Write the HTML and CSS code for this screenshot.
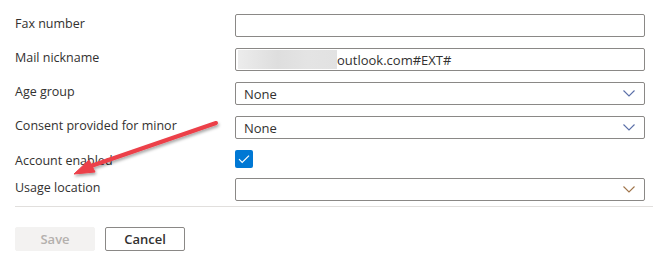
FILE: index.html
```html
<!DOCTYPE html>
<html lang="en">
<head>
  <meta charset="UTF-8">
  <title>User properties</title>
  <link rel="stylesheet" href="styles.css">
</head>
<body>

  <form class="props">
    <div class="row">
      <label>Fax number</label>
      <div class="field"></div>
    </div>
    <div class="row">
      <label>Mail nickname</label>
      <div class="field"><span class="blur"></span>outlook.com#EXT#</div>
    </div>
    <div class="row">
      <label>Age group</label>
      <div class="field select">None
        <svg class="chev" width="12" height="7" viewBox="0 0 12 7"><path d="M0.5 0.5 L6 6 L11.5 0.5" fill="none" stroke="#5b6fa8" stroke-width="1.1"/></svg>
      </div>
    </div>
    <div class="row">
      <label>Consent provided for minor</label>
      <div class="field select">None
        <svg class="chev" width="12" height="7" viewBox="0 0 12 7"><path d="M0.5 0.5 L6 6 L11.5 0.5" fill="none" stroke="#5b6fa8" stroke-width="1.1"/></svg>
      </div>
    </div>
    <div class="row check-row">
      <label>Account enabled</label>
      <span class="checkbox">
        <svg width="12" height="10" viewBox="0 0 12 10"><path d="M1 5.2 L4.2 8.4 L11 1.6" fill="none" stroke="#fff" stroke-width="1.2"/></svg>
      </span>
    </div>
    <div class="row">
      <label>Usage location</label>
      <div class="field select">
        <svg class="chev" width="12" height="7" viewBox="0 0 12 7"><path d="M0.5 0.5 L6 6 L11.5 0.5" fill="none" stroke="#a0744a" stroke-width="1.1"/></svg>
      </div>
    </div>
  </form>

  <hr class="divider">

  <div class="actions">
    <button type="button" class="btn" disabled>Save</button>
    <button type="button" class="btn">Cancel</button>
  </div>

  <!-- annotation arrow drawn over the form -->
  <svg class="arrow" width="653" height="256" viewBox="0 0 653 256">
    <defs>
      <filter id="sh" x="-20%" y="-20%" width="140%" height="140%">
        <feDropShadow dx="1" dy="2" stdDeviation="1.5" flood-color="#000" flood-opacity="0.35"/>
      </filter>
    </defs>
    <g filter="url(#sh)" fill="#ec3f48" stroke="#ec3f48">
      <line x1="216" y1="123" x2="88" y2="167" stroke-width="4" stroke-linecap="round"/>
      <polygon points="74,174 89,160 95,172" stroke-width="1" stroke-linejoin="round"/>
    </g>
  </svg>

</body>
</html>
```

FILE: styles.css
```css
body {
  margin: 0;
  padding: 14px 0 0 15px;
  font-family: 'Segoe UI', 'Open Sans', sans-serif;
  font-size: 12.5px;
  color: #323130;
  background-color: #fff;
  position: relative;
  height: 256px;
  box-sizing: border-box;
  overflow: hidden;
}

.props {
  display: flex;
  flex-direction: column;
  gap: 11px;
  width: 630px;
}

.row {
  display: grid;
  grid-template-columns: 220px 410px;
  align-items: start;
}

.row label {
  line-height: 20px;
}

.field {
  height: 23px;
  box-sizing: border-box;
  border: 1px solid #8a8886;
  border-radius: 2px;
  display: flex;
  align-items: center;
  padding-left: 8px;
  font-size: 13px;
  position: relative;
}

.blur {
  display: inline-block;
  width: 99px;
  height: 19px;
  margin-left: -6px;
  background: linear-gradient(90deg, #ececec, #dedede 40%, #e4e4e4 70%, #e2e2e2);
}

.select .chev {
  margin-left: auto;
  margin-right: 9px;
}

.check-row {
  margin-bottom: -4px;
}

.check-row label {
  padding-top: 1px;
}

.checkbox {
  width: 18px;
  height: 18px;
  margin-top: 0;
  border-radius: 2px;
  background-color: #0078d4;
  display: flex;
  align-items: center;
  justify-content: center;
}

.divider {
  border: none;
  border-top: 1px solid #e1dfdd;
  margin: 5px 0 0;
}

.actions {
  display: flex;
  gap: 10px;
  margin-top: 20px;
}

.btn {
  width: 80px;
  height: 24px;
  border: 1px solid #8a8886;
  border-radius: 2px;
  background-color: #fff;
  color: #323130;
  font-family: inherit;
  font-size: 13px;
  font-weight: 600;
  padding: 0;
}

.btn[disabled] {
  background-color: #f3f2f1;
  border-color: #f3f2f1;
  color: #b3b0ad;
}

.arrow {
  position: absolute;
  left: 0;
  top: 0;
  pointer-events: none;
}
```
